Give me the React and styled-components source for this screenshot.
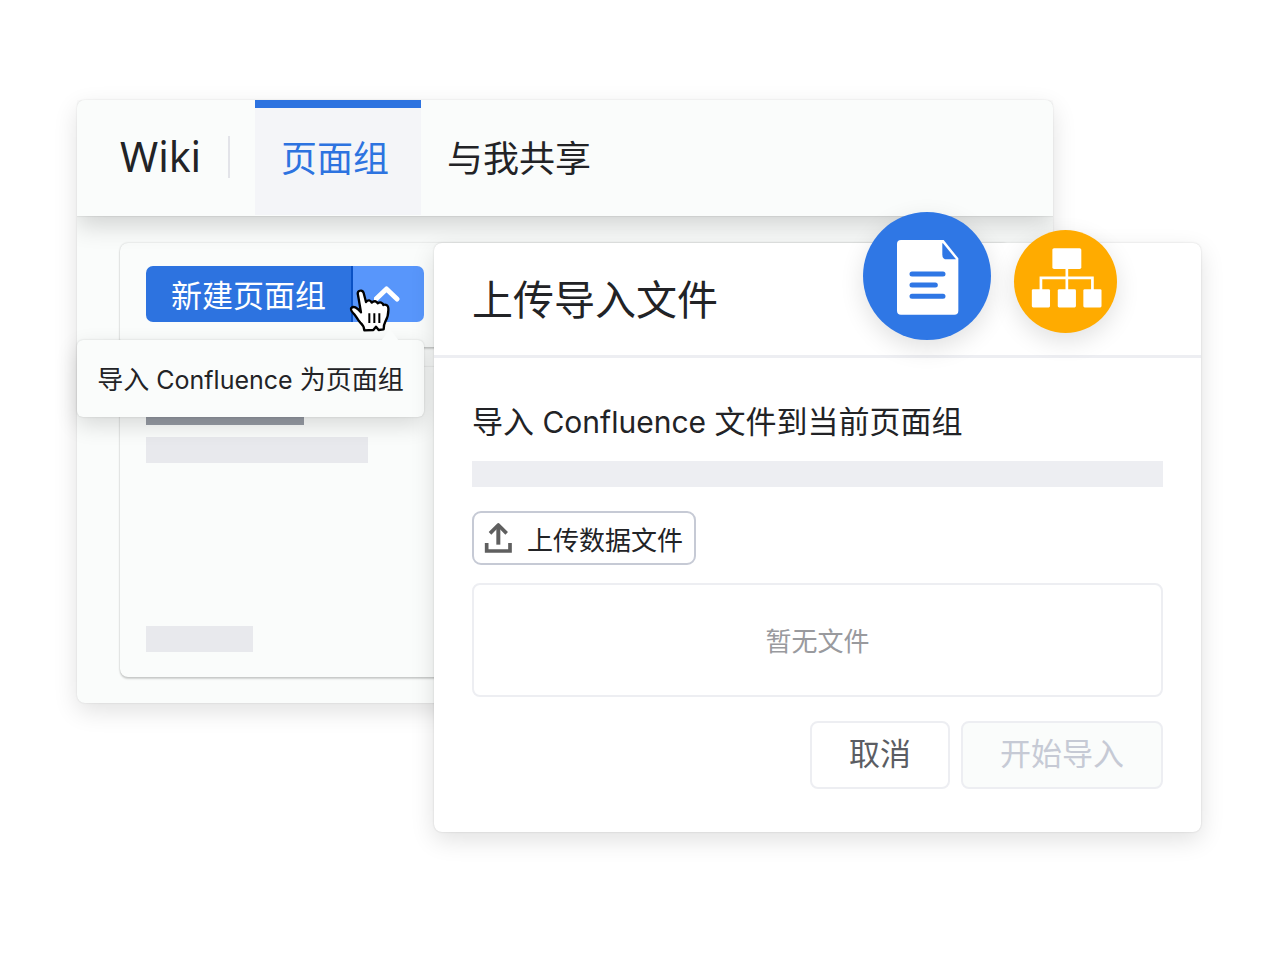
import React from 'react';
import styled, { createGlobalStyle } from 'styled-components';

const GlobalStyle = createGlobalStyle`
  * { box-sizing: border-box; }
  body {
    margin: 0;
    background: #fff;
    color: #222326;
    font-family: "Liberation Sans", "Noto Sans CJK SC", sans-serif;
  }
  button, a { font-family: inherit; }
  h1, h2, p { margin: 0; font-weight: 400; }
`;

const Stage = styled.main`
  display: grid;
  grid-template-columns: 357px 1fr 148px;
  grid-template-rows: 143px auto;
  padding: 100px 79px 100px 77px;
`;

const WikiPanel = styled.section`
  grid-column: 1 / 3;
  grid-row: 1 / 3;
  align-self: start;
  border-radius: 8px;
  background: #fafcfb;
  box-shadow: 0 0 2px rgba(0, 0, 0, 0.12), 0 8px 24px rgba(0, 0, 0, 0.12);
`;

const WikiHeader = styled.header`
  display: flex;
  height: 116px;
  padding-left: 43px;
  border-radius: 8px 8px 0 0;
  background: #fafcfb;
  box-shadow: 0 1px 1px rgba(0, 0, 0, 0.06), 0 10px 24px rgba(0, 0, 0, 0.16);
  clip-path: inset(0 0 -40px 0);
`;

const Brand = styled.h1`
  align-self: center;
  width: 108px;
  padding-bottom: 4px;
  font-family: "Noto Sans", sans-serif;
  font-size: 41px;
  line-height: 56px;
`;

const Divider = styled.span`
  align-self: center;
  width: 2px;
  height: 42px;
  margin: 0 25px 2px 0;
  background: #e3e4e9;
`;

const Tab = styled.a`
  height: 115px;
  padding: 0 32px 0 26px;
  border-top: 8px solid ${(p) => (p.$active ? '#2d73e0' : 'transparent')};
  background: ${(p) => (p.$active ? '#f4f5f8' : 'transparent')};
  color: ${(p) => (p.$active ? '#2d73e0' : '#222326')};
  font-size: 36px;
  line-height: 104px;
  text-decoration: none;
  white-space: nowrap;
`;

const Cards = styled.div`
  display: flex;
  flex-direction: column;
  gap: 20px;
  padding: 27px 43px 26px;
`;

const Card = styled.div`
  padding: 23px 26px 25px;
  border-radius: 8px;
  background: #fafcfb;
  box-shadow: 0 0 2px rgba(0, 0, 0, 0.2), 0 2px 2px rgba(0, 0, 0, 0.16);
`;

const SkeletonCard = styled(Card)`
  display: flex;
  flex-direction: column;
  height: 310px;
`;

const Skeleton = styled.div`
  width: ${(p) => p.$width};
  height: 26px;
  margin-top: ${(p) => p.$top || '0'};
  background: ${(p) => p.$color || '#e8e9ed'};
`;

const SplitButton = styled.div`
  position: relative;
  display: flex;
  width: 278px;
  height: 56px;
`;

const CreateButton = styled.button`
  flex: 1;
  padding: 6px 0 0;
  border: 0;
  border-right: 2px solid #0a51c4;
  border-radius: 7px 0 0 7px;
  background: #2d73e0;
  color: #fff;
  font-size: 31px;
  line-height: 50px;
`;

const ToggleButton = styled.button`
  display: grid;
  place-items: center;
  width: 71px;
  padding: 0;
  border: 0;
  border-radius: 0 7px 7px 0;
  background: #5896fb;
`;

const MenuTip = styled.div`
  position: absolute;
  top: 74px;
  right: 0;
  z-index: 1;
  width: 347px;
  height: 77px;
  border-radius: 6px;
  background: #fafcfb;
  box-shadow: 0 0 2px rgba(0, 0, 0, 0.16), 0 8px 22px rgba(0, 0, 0, 0.14);
  font-size: 26px;
  line-height: 80px;
  text-align: center;
  white-space: nowrap;

  &::before {
    content: "";
    position: absolute;
    top: -11px;
    right: 25px;
    border: solid transparent;
    border-width: 0 9px 12px;
    border-bottom-color: #fafcfb;
  }
`;

const Latin = styled.span`
  font-family: Inter, sans-serif;
  font-size: ${(p) => p.$size};
`;

const Pointer = styled.svg`
  position: absolute;
  top: 23px;
  left: 203px;
  z-index: 2;
`;

const Dialog = styled.section`
  position: relative;
  grid-column: 2 / 4;
  grid-row: 2;
  z-index: 3;
  border-radius: 8px;
  background: #fff;
  box-shadow: 0 0 2px rgba(0, 0, 0, 0.16), 0 8px 24px rgba(0, 0, 0, 0.12);
`;

const DialogHeader = styled.header`
  height: 115px;
  padding-left: 38px;
  border-bottom: 3px solid #edeef2;
`;

const DialogTitle = styled.h2`
  font-size: 41px;
  line-height: 116px;
`;

const DialogBody = styled.div`
  display: flex;
  flex-direction: column;
  align-items: flex-start;
  padding: 42px 38px 43px;
`;

const Lead = styled.p`
  margin-bottom: 16px;
  font-size: 31px;
  line-height: 44px;
  white-space: nowrap;
`;

const UploadButton = styled.button`
  display: flex;
  align-items: center;
  gap: 14px;
  height: 54px;
  margin: 24px 0 18px;
  padding: 0 11px 0 10px;
  border: 2px solid #c6cad5;
  border-radius: 9px;
  background: #fff;
  color: #222326;
  font-size: 26px;
  white-space: nowrap;
`;

const FileBox = styled.div`
  width: 100%;
  height: 114px;
  border: 2px solid #edeef2;
  border-radius: 8px;
  color: #999a9e;
  font-size: 26px;
  line-height: 114px;
  text-align: center;
`;

const Actions = styled.div`
  display: flex;
  align-self: flex-end;
  gap: 11px;
  margin-top: 24px;
`;

const ActionButton = styled.button`
  height: 68px;
  padding: 0 37px;
  border: 2px solid #edeef2;
  border-radius: 8px;
  background: ${(p) => (p.disabled ? '#fafcfb' : '#fff')};
  color: ${(p) => (p.disabled ? '#c6cad5' : '#5b5d63')};
  font-size: 31px;
  line-height: 62px;
  white-space: nowrap;
`;

const Badge = styled.div`
  position: absolute;
  top: ${(p) => p.$top};
  right: ${(p) => p.$right};
  width: ${(p) => p.$size};
  height: ${(p) => p.$size};
  border-radius: 50%;
  background: ${(p) => p.$color};
  box-shadow: 0 8px 24px rgba(0, 0, 0, 0.12);

  svg { display: block; width: 100%; height: 100%; }
`;

function HandPointer() {
  return (
    <Pointer width="43" height="44" viewBox="27 98 129 132" aria-hidden="true">
      <path
        d="M54 116 C50 102 67 98 71 110 L78 137 C84 130 92 131 95 139 C102 132 110 134 113 141 C120 136 128 138 130 146 C138 143 145 148 145 156 C146 174 143 184 136 196 C132 203 131 209 131 219 L116 221 L108 211 L100 221 L73 222 C72 211 68 205 61 199 C52 190 49 180 43 174 C37 168 30 161 34 155 C40 148 51 153 63 168 Z"
        fill="#fff"
        stroke="#000"
        strokeWidth="7"
        strokeLinejoin="round"
      />
      <path d="M88 171V200M103 171V200M118 171V200" stroke="#000" strokeWidth="6" />
    </Pointer>
  );
}

function ChevronUp() {
  return (
    <svg width="30" height="20" viewBox="0 0 30 20" aria-hidden="true">
      <path d="M2 15 12.500 5 23 15" fill="none" stroke="#fff" strokeWidth="5" strokeLinecap="round" strokeLinejoin="round" />
    </svg>
  );
}

function UploadIcon() {
  return (
    <svg width="29" height="32" viewBox="74 64 87 96" fill="none" stroke="#5f5f5f" strokeWidth="11" aria-hidden="true">
      <path d="M82 127V151H152V127" />
      <path d="M117 132V74" strokeWidth="12" />
      <path d="M92 98 117 73 142 98" strokeLinejoin="round" />
    </svg>
  );
}

function DocumentIcon() {
  return (
    <svg viewBox="0 0 384 384" aria-hidden="true">
      <path d="M112 84H242L286 139V296Q286 308 274 308H114Q102 308 102 296V96Q102 84 114 84Z" fill="#fff" />
      <path d="M238 93V128Q238 142 252 142H279L241 95Z" fill="#2f77e5" />
      <path d="M147 186H240M147 219H217M147 253H240" stroke="#2f77e5" strokeWidth="15" strokeLinecap="round" />
    </svg>
  );
}

function SitemapIcon() {
  return (
    <svg viewBox="0 0 306 306" fill="#fff" aria-hidden="true">
      <rect x="114" y="54" width="86" height="62" rx="5" />
      <rect x="53" y="176" width="54" height="54" rx="4" />
      <rect x="130" y="176" width="54" height="54" rx="4" />
      <rect x="206" y="176" width="54" height="54" rx="4" />
      <path d="M157 114V179M80 179V142H233V179" fill="none" stroke="#fff" strokeWidth="8" />
    </svg>
  );
}

export default function App() {
  return (
    <>
      <GlobalStyle />
      <Stage>
        <WikiPanel>
          <WikiHeader>
            <Brand>Wiki</Brand>
            <Divider />
            <Tab href="#groups" $active>页面组</Tab>
            <Tab href="#shared">与我共享</Tab>
          </WikiHeader>
          <Cards>
            <Card>
              <SplitButton>
                <CreateButton type="button">新建页面组</CreateButton>
                <ToggleButton type="button" aria-label="展开">
                  <ChevronUp />
                </ToggleButton>
                <MenuTip>导入<Latin $size="25px"> Confluence </Latin>为页面组</MenuTip>
                <HandPointer />
              </SplitButton>
            </Card>
            <SkeletonCard>
              <Skeleton $width="158px" $top="9px" $color="#959aa3" />
              <Skeleton $width="222px" $top="12px" />
              <Skeleton $width="107px" $top="auto" />
            </SkeletonCard>
          </Cards>
        </WikiPanel>

        <Dialog role="dialog" aria-labelledby="import-title">
          <DialogHeader>
            <DialogTitle id="import-title">上传导入文件</DialogTitle>
          </DialogHeader>
          <DialogBody>
            <Lead>导入<Latin $size="30px"> Confluence </Latin>文件到当前页面组</Lead>
            <Skeleton $width="100%" $color="#edeef2" />
            <UploadButton type="button">
              <UploadIcon />
              上传数据文件
            </UploadButton>
            <FileBox>暂无文件</FileBox>
            <Actions>
              <ActionButton type="button">取消</ActionButton>
              <ActionButton type="button" disabled>开始导入</ActionButton>
            </Actions>
          </DialogBody>
          <Badge $top="-31px" $right="210px" $size="128px" $color="#2f77e5">
            <DocumentIcon />
          </Badge>
          <Badge $top="-13px" $right="84px" $size="103px" $color="#ffab00">
            <SitemapIcon />
          </Badge>
        </Dialog>
      </Stage>
    </>
  );
}
